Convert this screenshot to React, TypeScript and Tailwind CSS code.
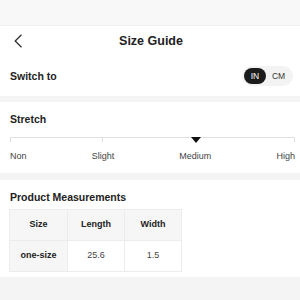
const stops = ['Non', 'Slight', 'Medium', 'High']

export default function App() {
  return (
    <div className="h-[300px] w-[300px] overflow-hidden bg-[#f4f4f4] font-['Liberation_Sans',Arial,sans-serif] text-[#222]">
      <div className="h-[26px] border-b border-[#f0f0f0] bg-[#f8f8f8]" />

      <div className="bg-white">
        <div className="relative flex h-[30px] items-center justify-center">
          <svg
            className="absolute left-[13px] top-[8px]"
            width="10"
            height="14"
            viewBox="0 0 10 14"
            fill="none"
          >
            <path d="M8.5 0.8L2.2 7l6.3 6.2" stroke="#333" strokeWidth="1.3" />
          </svg>
          <h1 className="pl-[2px] text-[12.5px] font-bold leading-[14px] text-[#222]">Size Guide</h1>
        </div>

        <div className="flex h-[40px] items-center justify-between pl-[10px] pr-[7px]">
          <span className="text-[10.5px] font-bold leading-[12px] text-[#222]">Switch to</span>
          <div className="flex h-[20px] w-[51px] items-center rounded-full bg-[#f3f3f3] pl-[2px]">
            <span className="flex h-[16px] w-[22px] items-center justify-center rounded-full bg-[#1c1c1c] text-[8.5px] text-white">
              IN
            </span>
            <span className="flex h-[16px] flex-1 items-center justify-center pr-[2px] text-[8.5px] text-[#333]">
              CM
            </span>
          </div>
        </div>
      </div>

      <div className="mt-[6px] bg-white pb-[11px] pl-[10px] pr-[5px] pt-[11px]">
        <h2 className="text-[10.5px] font-bold leading-[12px] text-[#222]">Stretch</h2>
        <div className="relative mt-[12px] h-[6px]">
          <div className="absolute left-0 right-0 top-0 border-t border-[#e0e0e0]" />
          <div className="absolute left-0 top-0 h-[5px] border-l border-[#e0e0e0]" />
          <div className="absolute left-[92px] top-0 h-[5px] border-l border-[#e0e0e0]" />
          <div className="absolute right-0 top-0 h-[5px] border-l border-[#e0e0e0]" />
          <svg className="absolute left-[181px] top-0" width="10" height="6" viewBox="0 0 10 6">
            <path d="M0 0h10L5 6z" fill="#111" />
          </svg>
        </div>
        <div className="mt-[7px] flex justify-between text-[9px] leading-[12px] text-[#444]">
          {stops.map((s) => (
            <span key={s}>{s}</span>
          ))}
        </div>
      </div>

      <div className="mt-[7px] bg-white px-[9px] pb-[5px] pt-[11px]">
        <h2 className="pl-[1px] text-[10.5px] font-bold leading-[12px] text-[#222]">
          Product Measurements
        </h2>
        <table className="mt-[6px] border-collapse text-center text-[9px]">
          <thead>
            <tr className="bg-[#f6f6f6]">
              <th className="h-[31px] w-[58px] border border-[#ececec] font-bold text-[#222]">Size</th>
              <th className="h-[31px] w-[57px] border border-[#ececec] font-bold text-[#222]">Length</th>
              <th className="h-[31px] w-[57px] border border-[#ececec] font-bold text-[#222]">Width</th>
            </tr>
          </thead>
          <tbody>
            <tr>
              <td className="h-[31px] border border-[#ececec] bg-[#f6f6f6] font-bold text-[#222]">one-size</td>
              <td className="h-[31px] border border-[#ececec] text-[#444]">25.6</td>
              <td className="h-[31px] border border-[#ececec] text-[#444]">1.5</td>
            </tr>
          </tbody>
        </table>
      </div>
    </div>
  )
}
